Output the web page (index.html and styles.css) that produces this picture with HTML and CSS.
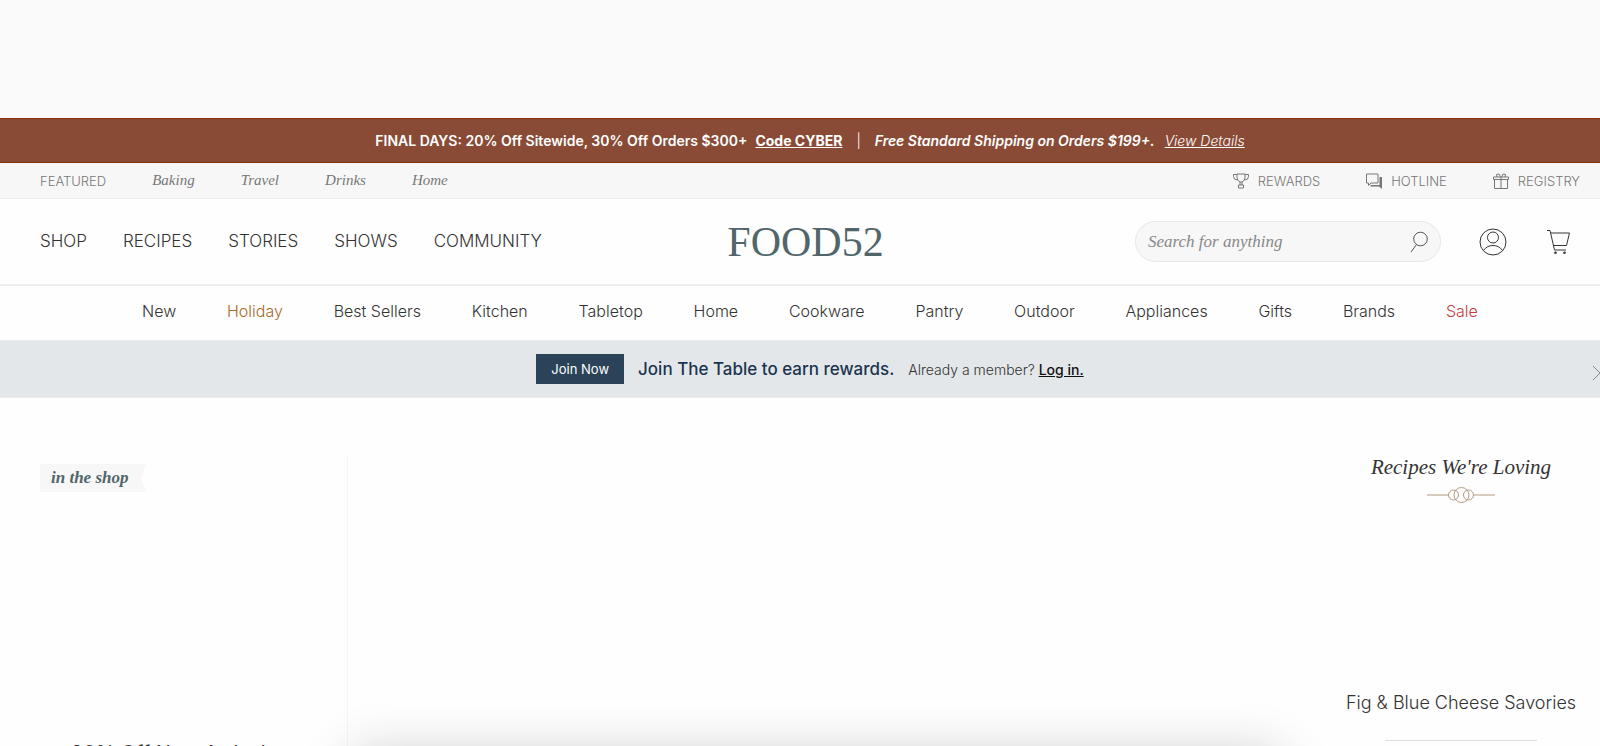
FILE: index.html
```html
<!DOCTYPE html>
<html lang="en">

<head>
    <meta charset="UTF-8">
    <meta name="viewport" content="width=device-width, initial-scale=1.0">
    <title>Food52</title>
    <link rel="stylesheet" href="styles.css">
</head>

<body>
    <div class="page">
        <div class="ad-slot"></div>

        <div class="promo">
            <span class="promo-text">FINAL DAYS: 20% Off Sitewide, 30% Off Orders $300+</span>
            <a href="#" class="promo-code">Code CYBER</a>
            <span class="promo-divider">|</span>
            <em class="promo-text">Free Standard Shipping on Orders $199+.</em>
            <a href="#" class="promo-details">View Details</a>
        </div>

        <div class="topbar">
            <nav class="featured">
                <span>FEATURED</span>
                <a href="#">Baking</a>
                <a href="#">Travel</a>
                <a href="#">Drinks</a>
                <a href="#">Home</a>
            </nav>
            <nav class="services">
                <a href="#">
                    <svg width="16" height="16" viewBox="0 0 16 16">
                        <path d="M4 1h8v3.500q0 3-3 4.500h-2q-3-1.500-3-4.500zM4 1.500H.5v2q0 3.500 4 3.500M12 1.500h3.500v2q0 3.500-4 3.500M7 9v3M9 9v3M5.500 12h5v3h-5z" />
                    </svg>
                    REWARDS
                </a>
                <a href="#">
                    <svg width="16" height="16" viewBox="0 0 16 16">
                        <path d="M.5 1h11.500v9H5l-2.500 2.500V10h-2z" />
                        <path class="solid" d="M13.500 4H16v12l-3-2.500H4.500V12h9z" />
                    </svg>
                    HOTLINE
                </a>
                <a href="#">
                    <svg width="16" height="16" viewBox="0 0 16 16">
                        <path d="M.5 4h15v2.500H.5zM1.500 6.500v9h13v-9M8 4v11.500M7.500 4L6 1 3.500 1.500 4 4M8.500 4L10 1l2.500.5L12 4" />
                    </svg>
                    REGISTRY
                </a>
            </nav>
        </div>

        <header class="header">
            <nav class="main-nav">
                <a href="#">SHOP</a>
                <a href="#">RECIPES</a>
                <a href="#">STORIES</a>
                <a href="#">SHOWS</a>
                <a href="#">COMMUNITY</a>
            </nav>
            <a href="#" class="logo">FOOD52</a>
            <div class="tools">
                <form class="search">
                    <input type="text" placeholder="Search for anything" aria-label="Search for anything">
                    <button type="submit" aria-label="Search">
                        <svg width="18" height="22" viewBox="0 0 18 22">
                            <circle cx="10.500" cy="8" r="6.800" />
                            <path d="M6.500 13.500L1 21" />
                        </svg>
                    </button>
                </form>
                <a href="#" class="account" aria-label="Account">
                    <svg width="28" height="28" viewBox="0 0 28 28">
                        <circle cx="14" cy="14" r="13" />
                        <circle cx="14" cy="9.500" r="5.500" />
                        <path d="M4.500 22.500C7 19 10 17.500 14 17.500s7 1.500 9.500 5" />
                    </svg>
                </a>
                <a href="#" class="cart" aria-label="Cart">
                    <svg width="24" height="26" viewBox="0 0 24 26">
                        <path d="M0 1.500h3L7.500 21H19M3.500 4H22.500l-3 12.500H6.500" />
                        <circle class="solid" cx="8.500" cy="23.700" r="1.300" />
                        <circle class="solid" cx="17.500" cy="23.700" r="1.300" />
                    </svg>
                </a>
            </div>
        </header>

        <nav class="categories">
            <a href="#">New</a>
            <a href="#" class="holiday">Holiday</a>
            <a href="#">Best Sellers</a>
            <a href="#">Kitchen</a>
            <a href="#">Tabletop</a>
            <a href="#">Home</a>
            <a href="#">Cookware</a>
            <a href="#">Pantry</a>
            <a href="#">Outdoor</a>
            <a href="#">Appliances</a>
            <a href="#">Gifts</a>
            <a href="#">Brands</a>
            <a href="#" class="sale">Sale</a>
        </nav>

        <div class="rewards">
            <button type="button" class="join-btn">Join Now</button>
            <strong>Join The Table to earn rewards.</strong>
            <p>Already a member? <a href="#">Log in.</a></p>
            <button type="button" class="close-btn" aria-label="Close">
                <svg width="16" height="16" viewBox="0 0 16 16">
                    <path d="M1 1l14 14M15 1L1 15" />
                </svg>
            </button>
        </div>

        <main class="content">
            <section class="shop">
                <h2 class="tag">in the shop</h2>
                <h3><a href="#">20% Off New Arrivals</a></h3>
            </section>
            <section class="feature"></section>
            <section class="recipes">
                <h2>Recipes We're Loving</h2>
                <svg class="ornament" width="68" height="18" viewBox="0 0 68 18">
                    <path d="M0 9h21M47 9h21" />
                    <circle cx="26.500" cy="9" r="5" />
                    <circle cx="34.500" cy="9" r="7.500" />
                    <circle cx="41.500" cy="9" r="5" />
                </svg>
                <h3><a href="#">Fig &amp; Blue Cheese Savories</a></h3>
            </section>
        </main>
    </div>

    <div class="drawer"></div>
</body>

</html>
```

FILE: styles.css
```css
:root {
    --sans: 'Inter', 'Liberation Sans', sans-serif;
    --serif: 'Liberation Serif', serif;
    --text: #333;
    --muted: #777;
    --line: #ededed;
    --light: #f7f7f7;
    --green: #50666a;
    --navy: #2a4359;
}

* {
    margin: 0;
    padding: 0;
    box-sizing: border-box;
}

body {
    font-family: var(--sans);
    font-size: 16px;
    font-weight: 300;
    color: var(--text);
    background-color: #fefefe;
    overflow: hidden;
}

a {
    color: inherit;
    text-decoration: none;
}

button {
    border: none;
    background: none;
    font-family: inherit;
    cursor: pointer;
}

svg {
    display: block;
    fill: none;
    stroke: currentColor;
}

svg .solid {
    fill: currentColor;
    stroke: none;
}

/* runs a little past the right edge of the window */
.page {
    width: calc(100% + 20px);
}

.ad-slot {
    height: 118px;
    background-color: #fafafa;
}

.promo {
    display: flex;
    align-items: center;
    justify-content: center;
    height: 45px;
    border-top: 1px solid #853207;
    border-bottom: 1px solid #853207;
    background-color: #8a4b36;
    color: #fff;
    font-size: 14px;
}

.promo-text {
    font-weight: 600;
}

.promo-code {
    margin-left: 8px;
    font-weight: 700;
    text-decoration: underline;
}

.promo-divider {
    margin: 0 14px;
}

.promo-details {
    margin-left: 10px;
    font-style: italic;
    text-decoration: underline;
}

.topbar {
    display: flex;
    justify-content: space-between;
    height: 36px;
    padding: 0 40px;
    border-bottom: 1px solid var(--line);
    background-color: var(--light);
    color: var(--muted);
    font-size: 13px;
}

.featured,
.services,
.services a {
    display: flex;
    align-items: center;
}

.featured,
.services {
    gap: 46px;
}

.services a {
    gap: 9px;
}

.featured a {
    font-family: var(--serif);
    font-size: 15px;
    font-style: italic;
    font-weight: 400;
}

.header {
    display: grid;
    grid-template-columns: 1fr auto 1fr;
    align-items: center;
    height: 87px;
    padding: 0 49px 0 40px;
    border-bottom: 2px solid var(--line);
}

.main-nav {
    display: flex;
    gap: 36px;
    padding-bottom: 2px;
}

.logo {
    font-family: var(--serif);
    font-size: 42px;
    font-weight: 400;
    color: var(--green);
}

.tools {
    display: flex;
    align-items: center;
    justify-content: flex-end;
}

.main-nav a {
    font-size: 17px;
}

.search {
    display: flex;
    align-items: center;
    width: 306px;
    height: 41px;
    padding: 0 12px;
    border: 1px solid #e8e8e8;
    border-radius: 21px;
    background-color: var(--light);
}

.search input {
    flex: 1;
    min-width: 0;
    border: none;
    outline: none;
    background: none;
    font-family: var(--serif);
    font-size: 17px;
    font-style: italic;
}

.search input::placeholder {
    color: #888;
}

.search button {
    color: #555;
}

.account {
    margin-left: 38px;
}

.cart {
    margin-left: 40px;
}

.categories {
    display: flex;
    align-items: center;
    justify-content: space-between;
    height: 54px;
    padding: 0 142px 4px;
}

.categories .holiday {
    color: #a8682a;
}

.categories .sale {
    color: #c43c3c;
}

.rewards {
    position: relative;
    display: flex;
    align-items: center;
    justify-content: center;
    gap: 14px;
    height: 58px;
    border-top: 1px solid var(--line);
    border-bottom: 1px solid var(--line);
    background-color: #e3e7ea;
    font-size: 14px;
}

.join-btn {
    height: 30px;
    padding: 0 15px;
    background-color: var(--navy);
    color: #fff;
    font-size: 13px;
}

.rewards strong {
    font-size: 17px;
    font-weight: 500;
    color: #1b3550;
}

.rewards p a {
    font-weight: 500;
    color: #111;
    text-decoration: underline;
}

.close-btn {
    position: absolute;
    top: 24px;
    right: 12px;
    color: #888;
}

.content {
    display: grid;
    grid-template-columns: 308px 1fr 278px;
    padding: 57px 0 0 40px;
}

.shop {
    padding-top: 9px;
    border-right: 1px solid #f5f5f5;
}

.tag {
    width: 106px;
    height: 28px;
    padding-left: 11px;
    background-color: var(--light);
    clip-path: polygon(0 0, 100% 0, 95% 50%, 100% 100%, 0 100%);
    color: var(--green);
    font-family: var(--serif);
    font-size: 17px;
    font-style: italic;
    font-weight: 700;
    line-height: 27px;
}

.shop h3 {
    margin: 249px 40px 0 0;
    font-size: 20px;
    font-weight: 400;
    line-height: 24px;
    text-align: center;
}

.recipes {
    padding-right: 40px;
    text-align: center;
}

.recipes h2 {
    font-family: var(--serif);
    font-size: 21px;
    font-style: italic;
    font-weight: 400;
    line-height: 24px;
}

.ornament {
    margin: 7px auto 0;
    color: #b39a7f;
}

.recipes h3 {
    margin-top: 186px;
    font-size: 18px;
    font-weight: 300;
    line-height: 26px;
    white-space: nowrap;
}

.recipes h3::after {
    content: '';
    display: block;
    width: 152px;
    margin: 24px auto 0;
    border-top: 1px solid #ddd;
}

/* sits just under the window, only its shadow shows */
.drawer {
    position: fixed;
    top: 100%;
    left: 22%;
    right: 20%;
    height: 300px;
    box-shadow: 0 8px 50px rgba(0, 0, 0, 0.2);
}
```
